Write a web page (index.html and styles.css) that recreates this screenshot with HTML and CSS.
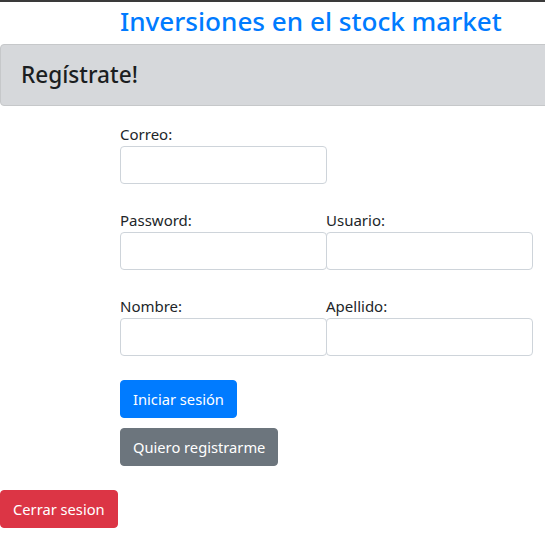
FILE: index.html
```html
<!DOCTYPE html>
<html lang="es">
<head>
<meta charset="utf-8">
<title>Registro</title>
<link rel="stylesheet" href="styles.css">
</head>
<body>
<div class="topline"></div>
<h3 class="title">Inversiones en el stock market</h3>
<div class="alert"><h4 class="alert-heading">Regístrate!</h4></div>
<form class="form">
  <div class="row">
    <div class="field">
      <label class="label">Correo:</label>
      <input class="input" type="text">
    </div>
  </div>
  <div class="row">
    <div class="field">
      <label class="label">Password:</label>
      <input class="input" type="password">
    </div>
    <div class="field">
      <label class="label">Usuario:</label>
      <input class="input" type="text">
    </div>
  </div>
  <div class="row">
    <div class="field">
      <label class="label">Nombre:</label>
      <input class="input" type="text">
    </div>
    <div class="field">
      <label class="label">Apellido:</label>
      <input class="input" type="text">
    </div>
  </div>
  <div class="actions">
    <button type="button" class="btn btn-primary">Iniciar sesión</button>
    <button type="button" class="btn btn-secondary">Quiero registrarme</button>
  </div>
</form>
<div class="logout">
  <button type="button" class="btn btn-danger">Cerrar sesion</button>
</div>
</body>
</html>
```
FILE: styles.css
```css
html, body {
  margin: 0;
  padding: 0;
  background: #fff;
}
body {
  font-family: "Noto Sans", "Open Sans", sans-serif;
  font-size: 16px;
  color: #212529;
  width: 545px;
  overflow: hidden;
}
.topline {
  height: 2px;
  background: #3a3a3a;
}
.title {
  margin: 0 0 4px 0;
  padding-left: 120px;
  font-size: 26.1px;
  font-weight: 500;
  line-height: 38px;
  color: #007bff;
  white-space: nowrap;
}
.alert {
  margin: 0 -10px 16px 0;
  padding: 12px 20px;
  background: #d6d8db;
  border: 1px solid #c6c8ca;
  border-radius: 4px;
}
.alert-heading {
  margin: 0;
  font-size: 22.6px;
  font-weight: 500;
  line-height: 36px;
  color: #1b1e21;
}
.form {
  padding-left: 120px;
  display: flex;
  flex-direction: column;
}
.row {
  display: flex;
  margin-bottom: 24px;
}
.field {
  display: flex;
  flex-direction: column;
  width: 206px;
}
.label {
  font-size: 15px;
  line-height: 24px;
}
.input {
  box-sizing: border-box;
  width: 207px;
  height: 38px;
  border: 1px solid #ced4da;
  border-radius: 4px;
  background: #fff;
  margin: 0;
}
.actions {
  display: flex;
  flex-direction: column;
  align-items: flex-start;
  gap: 10px;
}
.btn {
  font-family: inherit;
  font-size: 14.7px;
  line-height: 24px;
  height: 38px;
  padding: 6px 12px;
  border: 1px solid transparent;
  border-radius: 4px;
  color: #fff;
  cursor: pointer;
}
.btn-primary { background: #007bff; border-color: #007bff; }
.btn-secondary { background: #6c757d; border-color: #6c757d; }
.btn-danger { background: #dc3545; border-color: #dc3545; }
.logout {
  margin-top: 24px;
}
```
